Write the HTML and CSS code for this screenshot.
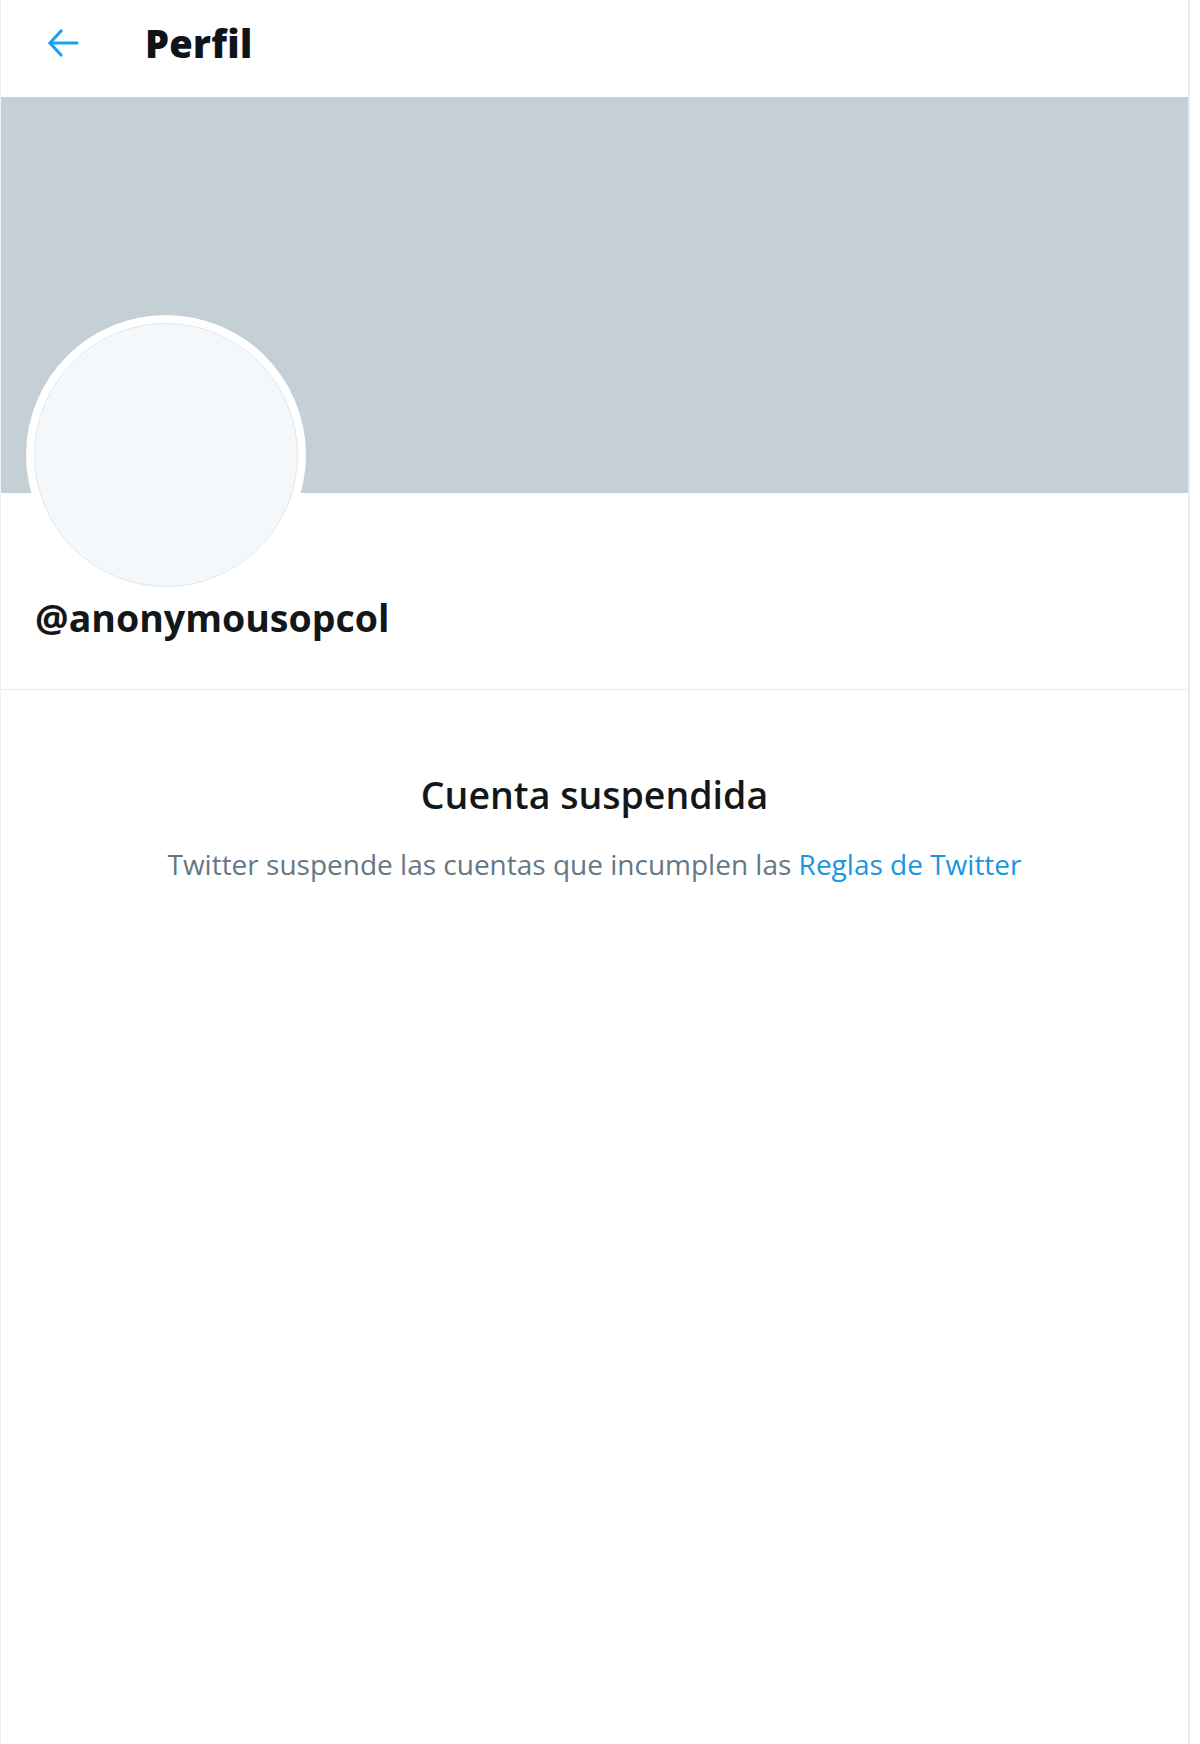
FILE: index.html
```html
<!DOCTYPE html>
<html lang="es">
<head>
<meta charset="utf-8">
<title>Perfil</title>
<link rel="stylesheet" href="styles.css">
</head>
<body>
<div class="column">
  <header class="topbar">
    <span class="back" aria-label="Atrás">
      <svg width="32" height="28" viewBox="0 0 32 28" fill="none" stroke="#1da1f2" stroke-width="3.2" stroke-linecap="round" stroke-linejoin="round">
        <path d="M3 14 H30"/>
        <path d="M14 2 L3 14 L14 26"/>
      </svg>
    </span>
    <h1 class="title">Perfil</h1>
  </header>
  <div class="banner"></div>
  <section class="profile">
    <div class="avatar-ring"><div class="avatar"></div></div>
    <div class="handle">@anonymousopcol</div>
  </section>
  <section class="suspended">
    <h2 class="s-title">Cuenta suspendida</h2>
    <p class="s-text">Twitter suspende las cuentas que incumplen las <a class="s-link" href="#">Reglas de Twitter</a></p>
  </section>
</div>
</body>
</html>
```
FILE: styles.css
```css
html, body {
  margin: 0;
  padding: 0;
  background: #ffffff;
}
body {
  font-family: "Open Sans", "Noto Sans", sans-serif;
  color: #14171a;
}
.column {
  width: 1187px;
  min-height: 1744px;
  border-left: 1px solid #eef1f4;
  border-right: 2px solid #e6ecf0;
  box-sizing: content-box;
}
.topbar {
  height: 97px;
  display: flex;
  align-items: center;
  padding-left: 46px;
  box-sizing: border-box;
}
.back {
  display: flex;
  width: 32px;
  height: 28px;
  margin-top: -12px;
}
.title {
  margin: -12px 0 0 66px;
  font-size: 38px;
  font-weight: 800;
  line-height: 1;
  color: #0f1419;
  letter-spacing: 0.3px;
}
.banner {
  height: 396px;
  background: #c4cfd6;
}
.profile {
  display: flex;
  flex-direction: column;
  align-items: flex-start;
  padding: 0 0 0 25px;
  border-bottom: 1px solid #e6ecf0;
  height: 197px;
  box-sizing: border-box;
}
.avatar-ring {
  width: 280px;
  height: 280px;
  margin-top: -178px;
  border-radius: 50%;
  background: #ffffff;
  padding: 8px;
  box-sizing: border-box;
  flex: none;
}
.avatar {
  width: 100%;
  height: 100%;
  border-radius: 50%;
  background: #f5f8fa;
  border: 1px solid #e1e8ed;
  box-sizing: border-box;
}
.handle {
  margin: -2px 0 0 9px;
  font-size: 37.5px;
  font-weight: 700;
  line-height: 50px;
  color: #14171a;
}
.suspended {
  text-align: center;
  padding-top: 80px;
}
.s-title {
  margin: 0;
  font-size: 37.5px;
  font-weight: 600;
  line-height: 50px;
  color: #14171a;
}
.s-text {
  margin: 25px 0 0;
  font-size: 28px;
  line-height: 38px;
  color: #657786;
}
.s-link {
  color: #1b95e0;
  text-decoration: none;
}
```
